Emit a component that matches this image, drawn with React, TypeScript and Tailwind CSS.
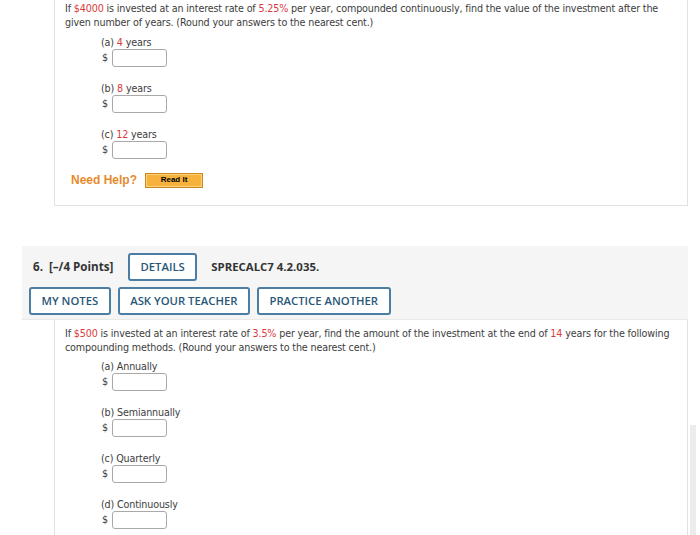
import React from 'react';

const red = 'text-[#d9393c]';

function AnswerRow({ label }: { label: React.ReactNode }) {
  return (
    <div className="ml-[36px] mb-[15px]">
      <div className="leading-[13px] h-[13px]">{label}</div>
      <div className="flex items-center h-[18px]">
        <span className="w-[10px] ml-[1px]">$</span>
        <div className="w-[55px] h-[18px] rounded-[3px] border border-[#a9a9a9] bg-white" />
      </div>
    </div>
  );
}

function OutlineButton({ children }: { children: React.ReactNode }) {
  return (
    <div className="h-[28px] px-[10.5px] flex items-center border-2 border-[#4c7ea3] rounded-[3px] bg-white text-[#295777] text-[11.3px] font-semibold">
      {children}
    </div>
  );
}

export default function App() {
  return (
    <div className="relative w-[700px] h-[535px] overflow-hidden bg-white text-[#3d3d3d] font-['DejaVu_Sans',Verdana,sans-serif] text-[9.6px] tracking-[-0.15px]">
      {/* previous question */}
      <section className="ml-[54px] w-[634px] border-l border-r border-b border-[#e2e2e2] pl-[10px] pt-[2px] pb-[16px]">
        <p className="leading-[14px] pr-[10px]">
          If <span className={red}>$4000</span> is invested at an interest rate of <span className={red}>5.25%</span> per year, compounded continuously, find the value of the investment after the given number of years. (Round your answers to the nearest cent.)
        </p>
        <div className="mt-[6px]">
          <AnswerRow label={<>(a) <span className={red}>4</span> years</>} />
          <AnswerRow label={<>(b) <span className={red}>8</span> years</>} />
          <AnswerRow label={<>(c) <span className={red}>12</span> years</>} />
        </div>
        <div className="flex items-center ml-[6px] -mt-[3px] gap-[8px] tracking-normal">
          <span className="font-['Liberation_Sans',Arial,sans-serif] font-bold text-[12px] text-[#e68b2c]">Need Help?</span>
          <div className="w-[58px] h-[15px] flex items-center justify-center bg-[#f7b23d] border border-[#c98619] shadow-[inset_0_0_0_1px_#fbd07f] font-['Liberation_Sans',Arial,sans-serif] font-bold text-[8px] text-black">
            Read It
          </div>
        </div>
      </section>

      {/* question 6 header */}
      <section className="mt-[40px] ml-[22px] w-[666px] h-[74px] bg-[#f5f5f5] border-b border-[#e9e9e9] pt-[7px] font-['Open_Sans',sans-serif] text-[#333] tracking-normal">
        <div className="flex items-center h-[28px]">
          <span className="ml-[11px] w-[95px] text-[11.6px] font-bold">6.&nbsp; [–/4 Points]</span>
          <OutlineButton>DETAILS</OutlineButton>
          <span className="ml-[14px] text-[11.4px] font-bold">SPRECALC7 4.2.035.</span>
        </div>
        <div className="flex items-center gap-[7px] mt-[6px] ml-[7px]">
          <OutlineButton>MY NOTES</OutlineButton>
          <OutlineButton>ASK YOUR TEACHER</OutlineButton>
          <OutlineButton>PRACTICE ANOTHER</OutlineButton>
        </div>
      </section>

      {/* question 6 body */}
      <section className="ml-[54px] w-[634px] h-[300px] border-l border-r border-[#e2e2e2] pl-[10px] pt-[7px]">
        <p className="leading-[14px] pr-[10px]">
          If <span className={red}>$500</span> is invested at an interest rate of <span className={red}>3.5%</span> per year, find the amount of the investment at the end of <span className={red}>14</span> years for the following compounding methods. (Round your answers to the nearest cent.)
        </p>
        <div className="mt-[5px]">
          <AnswerRow label="(a) Annually" />
          <AnswerRow label="(b) Semiannually" />
          <AnswerRow label="(c) Quarterly" />
          <AnswerRow label="(d) Continuously" />
        </div>
      </section>

      {/* scrollbar thumb */}
      <div className="absolute left-[690px] top-[425px] w-[6px] h-[110px] bg-[#ececec]" />
    </div>
  );
}
